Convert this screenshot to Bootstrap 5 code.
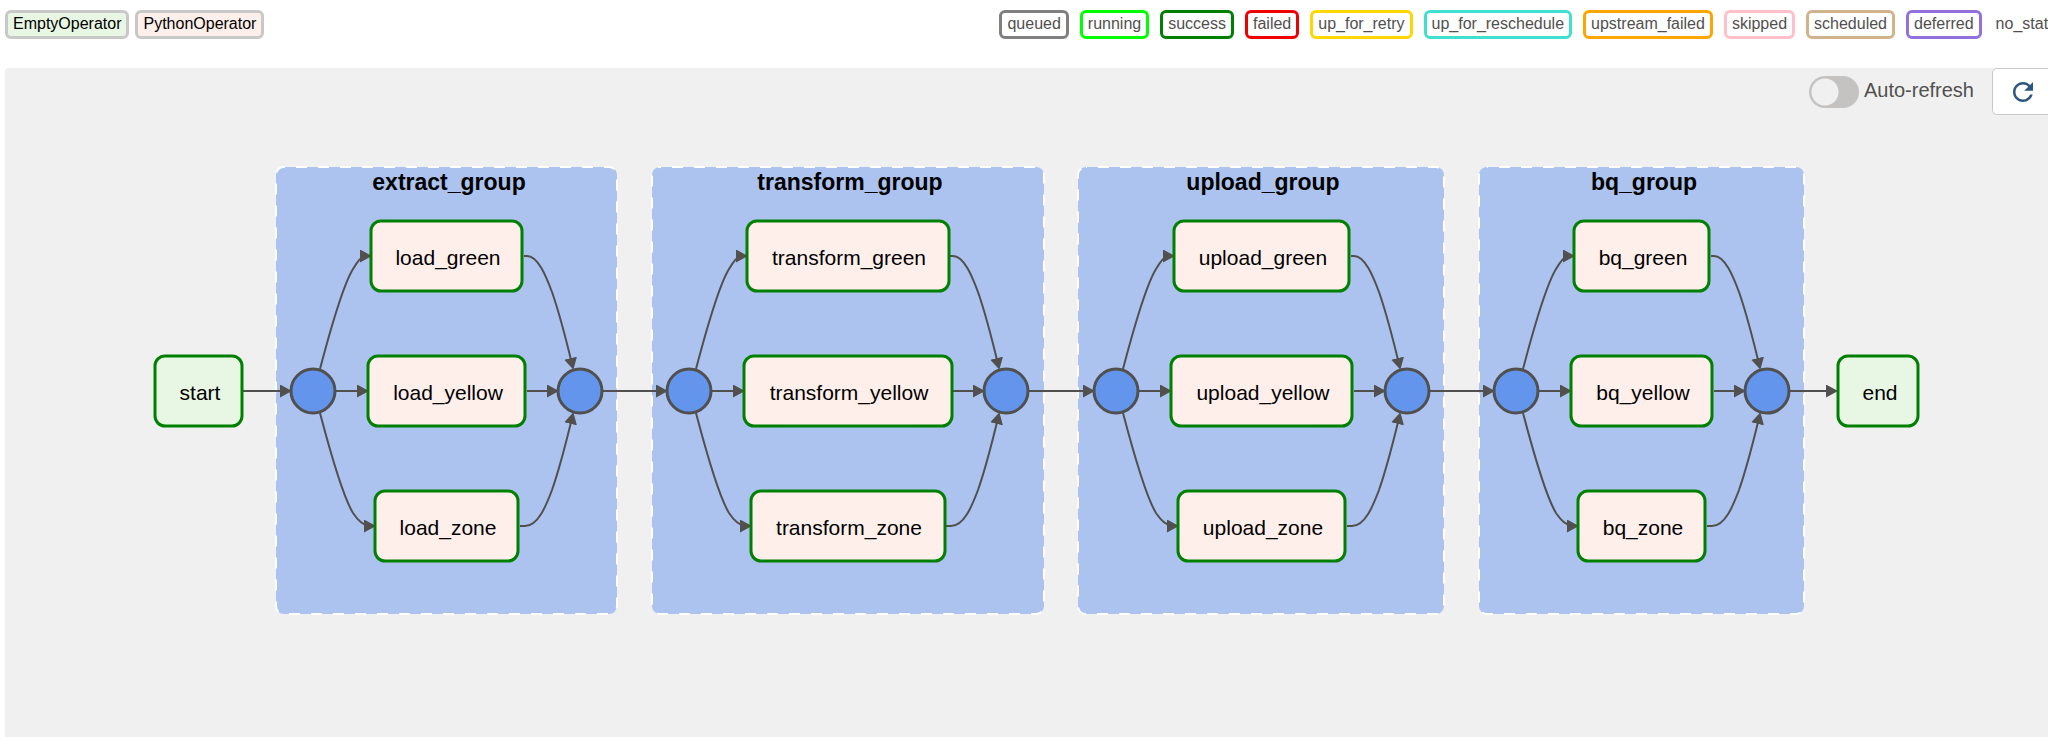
<!DOCTYPE html>
<html lang="en">
<head>
<meta charset="utf-8">
<meta name="viewport" content="width=device-width, initial-scale=1">
<title>DAG graph</title>
<link href="https://cdn.jsdelivr.net/npm/bootstrap@5.3.0/dist/css/bootstrap.min.css" rel="stylesheet">
<style>
  body { font-family: "Liberation Sans", Arial, sans-serif; color: #51504f; background: #fff; }
  .legend-bar { padding: 10px 0 0 5px; height: 68px; }
  .legend-types { gap: 6px; }
  .legend-states { gap: 11px; margin-right: -25px; }
  .tag { border: 3px solid #c8c8c8; border-radius: 6px; padding: 0 5px 1px; font-size: 16px; line-height: 22px; white-space: nowrap; }
  .legend-types .tag { color: #000; }
  .tag-empty { background: #e8f7e4; }
  .tag-python { background: #ffefeb; }
  .st-queued { border-color: #808080; }
  .st-running { border-color: #00ff00; }
  .st-success { border-color: #008000; }
  .st-failed { border-color: #f00000; }
  .st-retry { border-color: #ffd700; }
  .st-reschedule { border-color: #40e0d0; }
  .st-upstream { border-color: #ffa500; }
  .st-skipped { border-color: #ffc0cb; }
  .st-scheduled { border-color: #d2b48c; }
  .st-deferred { border-color: #9370db; }
  .legend-states .st-none { border-color: #fff; padding-left: 0; }
  .graph { background: #f0f0f0; margin-left: 5px; border-top-left-radius: 4px; }
  .graph-tools { height: 47px; margin-right: -6px; }
  .form-switch.auto-refresh { gap: 5px; padding: 0; margin: 0 18px 0 0; min-height: 0; }
  .form-switch.auto-refresh .form-check-input { width: 50px; height: 32px; margin: 0; border: 0; background-color: #c4c3c1; background-size: 34px 34px; background-position: left -1px center; background-image: radial-gradient(circle, #f0f0f0 13px, transparent 14px); }
  .auto-refresh label { font-size: 20px; line-height: 24px; padding-bottom: 3px; }
  .btn-refresh { width: 62px; background: #fff; border: 1px solid #c8c8c8; border-radius: 5px; color: #2c5680; }
  .dag { font-size: 21px; text-anchor: middle; fill: #000; }
  .dag .cluster { fill: #acc3ef; stroke: #fff; stroke-width: 2; stroke-dasharray: 11 11; stroke-dashoffset: 10; }
  .dag .title { font-size: 23px; font-weight: 700; }
  .dag .task { fill: #ffefeb; stroke: #008000; stroke-width: 3; }
  .dag .empty { fill: #e8f7e4; }
  .dag .join { fill: #6495ed; stroke: #51504f; stroke-width: 3; }
  .dag .edge { fill: none; stroke: #51504f; stroke-width: 2; }
</style>
</head>
<body class="d-flex flex-column min-vh-100 overflow-hidden">
<header class="legend-bar d-flex align-items-start justify-content-between">
  <div class="legend-types d-flex">
    <span class="tag tag-empty">EmptyOperator</span>
    <span class="tag tag-python">PythonOperator</span>
  </div>
  <div class="legend-states d-flex">
    <span class="tag st-queued">queued</span>
    <span class="tag st-running">running</span>
    <span class="tag st-success">success</span>
    <span class="tag st-failed">failed</span>
    <span class="tag st-retry">up_for_retry</span>
    <span class="tag st-reschedule">up_for_reschedule</span>
    <span class="tag st-upstream">upstream_failed</span>
    <span class="tag st-skipped">skipped</span>
    <span class="tag st-scheduled">scheduled</span>
    <span class="tag st-deferred">deferred</span>
    <span class="tag st-none">no_status</span>
  </div>
</header>
<main class="graph flex-grow-1">
  <div class="graph-tools d-flex justify-content-end">
    <div class="form-check form-switch auto-refresh d-flex align-items-center">
      <input class="form-check-input" type="checkbox" role="switch" id="autoRefresh">
      <label for="autoRefresh">Auto-refresh</label>
    </div>
    <button type="button" class="btn-refresh d-flex align-items-center justify-content-center p-0" aria-label="Refresh">
      <svg width="30" height="30" viewBox="0 0 24 24" fill="currentColor" aria-hidden="true"><path d="M17.65 6.35C16.2 4.9 14.21 4 12 4c-4.42 0-7.99 3.58-7.99 8s3.57 8 7.99 8c3.73 0 6.84-2.55 7.73-6h-2.08c-.82 2.33-3.04 4-5.65 4-3.31 0-6-2.69-6-6s2.69-6 6-6c1.66 0 3.14.69 4.22 1.78L13 11h7V4l-2.35 2.35z"/></svg>
    </button>
  </div>
  <svg class="dag d-block w-100" viewBox="5 115 2043 622">
    <defs>
      <marker id="arrow" viewBox="0 0 12 13" refX="6" refY="6.5" markerWidth="12" markerHeight="13" markerUnits="userSpaceOnUse" orient="auto"><path d="M0 0L12 6.5L0 13z" fill="#51504f"/></marker>
      <!-- edges leaving and entering a join node, relative to its centre -->
      <g id="fanOut">
        <path class="edge" marker-end="url(#arrow)" d="M7 -22C17 -60 29 -104 40 -122Q47 -134 52 -135h1"/>
        <path class="edge" marker-end="url(#arrow)" d="M23 0H50"/>
        <path class="edge" marker-end="url(#arrow)" d="M7 22C17 60 29 104 40 122Q48 134 56 135h1"/>
        <circle class="join" r="22"/>
      </g>
      <g id="fanIn">
        <path class="edge" marker-end="url(#arrow)" d="M-56 -135h3C-42 -135 -34 -115 -28 -99C-20 -76 -14 -52 -8 -27"/>
        <path class="edge" marker-end="url(#arrow)" d="M-53 0H-27"/>
        <path class="edge" marker-end="url(#arrow)" d="M-60 135h5C-42 135 -34 115 -28 99C-20 76 -14 52 -8 27"/>
        <circle class="join" r="22"/>
      </g>
    </defs>

    <rect class="cluster" x="276" y="167" width="341" height="447" rx="8"/>
    <rect class="cluster" x="652" y="167" width="392" height="447" rx="8"/>
    <rect class="cluster" x="1078" y="167" width="366" height="447" rx="8"/>
    <rect class="cluster" x="1479" y="167" width="325" height="447" rx="8"/>

    <path class="edge" marker-end="url(#arrow)" d="M243 391H286"/>
    <path class="edge" marker-end="url(#arrow)" d="M602 391H662"/>
    <path class="edge" marker-end="url(#arrow)" d="M1028 391H1089"/>
    <path class="edge" marker-end="url(#arrow)" d="M1429 391H1489"/>
    <path class="edge" marker-end="url(#arrow)" d="M1789 391H1832"/>

    <use href="#fanOut" x="313" y="391"/><use href="#fanIn" x="580" y="391"/>
    <use href="#fanOut" x="689" y="391"/><use href="#fanIn" x="1006" y="391"/>
    <use href="#fanOut" x="1116" y="391"/><use href="#fanIn" x="1407" y="391"/>
    <use href="#fanOut" x="1516" y="391"/><use href="#fanIn" x="1767" y="391"/>

    <rect class="task empty" x="155" y="356" width="87" height="70" rx="10"/><text x="200" y="400">start</text>

    <text class="title" x="449" y="190">extract_group</text>
    <rect class="task" x="371" y="221" width="151" height="70" rx="10"/><text x="448" y="265">load_green</text>
    <rect class="task" x="368" y="356" width="157" height="70" rx="10"/><text x="448" y="400">load_yellow</text>
    <rect class="task" x="375" y="491" width="143" height="70" rx="10"/><text x="448" y="535">load_zone</text>

    <text class="title" x="850" y="190">transform_group</text>
    <rect class="task" x="747" y="221" width="202" height="70" rx="10"/><text x="849" y="265">transform_green</text>
    <rect class="task" x="744" y="356" width="208" height="70" rx="10"/><text x="849" y="400">transform_yellow</text>
    <rect class="task" x="751" y="491" width="194" height="70" rx="10"/><text x="849" y="535">transform_zone</text>

    <text class="title" x="1263" y="190">upload_group</text>
    <rect class="task" x="1174" y="221" width="175" height="70" rx="10"/><text x="1263" y="265">upload_green</text>
    <rect class="task" x="1171" y="356" width="181" height="70" rx="10"/><text x="1263" y="400">upload_yellow</text>
    <rect class="task" x="1178" y="491" width="167" height="70" rx="10"/><text x="1263" y="535">upload_zone</text>

    <text class="title" x="1644" y="190">bq_group</text>
    <rect class="task" x="1574" y="221" width="135" height="70" rx="10"/><text x="1643" y="265">bq_green</text>
    <rect class="task" x="1571" y="356" width="141" height="70" rx="10"/><text x="1643" y="400">bq_yellow</text>
    <rect class="task" x="1578" y="491" width="127" height="70" rx="10"/><text x="1643" y="535">bq_zone</text>

    <rect class="task empty" x="1838" y="356" width="80" height="70" rx="10"/><text x="1880" y="400">end</text>
  </svg>
</main>
<script src="https://cdn.jsdelivr.net/npm/bootstrap@5.3.0/dist/js/bootstrap.bundle.min.js"></script>
</body>
</html>
